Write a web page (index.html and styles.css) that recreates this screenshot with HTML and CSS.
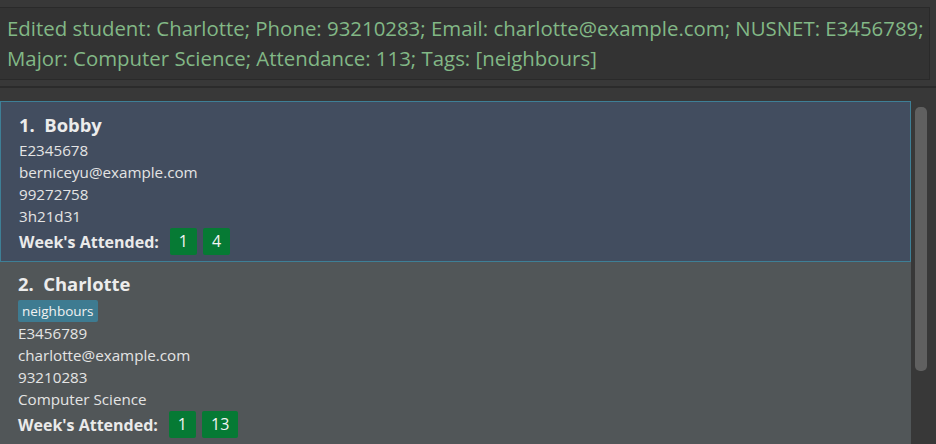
FILE: index.html
```html
<!DOCTYPE html>
<html>
<head>
<meta charset="utf-8">
<link rel="stylesheet" href="styles.css">
</head>
<body>
<div class="app">
  <div class="result-box">
    <p class="result-text">Edited student: Charlotte; Phone: 93210283; Email: charlotte@example.com; NUSNET: E3456789; Major: Computer Science; Attendance: 113; Tags: [neighbours]</p>
  </div>
  <div class="divider"></div>
  <div class="list-area">
    <div class="list">
      <div class="card selected">
        <div class="name">1.&nbsp;&nbsp;Bobby</div>
        <div class="field">E2345678</div>
        <div class="field">berniceyu@example.com</div>
        <div class="field">99272758</div>
        <div class="field">3h21d31</div>
        <div class="weeks"><span class="weeks-label">Week's Attended:</span><span class="badge">1</span><span class="badge">4</span></div>
      </div>
      <div class="card">
        <div class="name">2.&nbsp;&nbsp;Charlotte</div>
        <div class="tags"><span class="tag">neighbours</span></div>
        <div class="field">E3456789</div>
        <div class="field">charlotte@example.com</div>
        <div class="field">93210283</div>
        <div class="field">Computer Science</div>
        <div class="weeks"><span class="weeks-label">Week's Attended:</span><span class="badge">1</span><span class="badge">13</span></div>
      </div>
    </div>
    <div class="scroll-track"><div class="scroll-thumb"></div></div>
  </div>
</div>
</body>
</html>
```

FILE: styles.css
```css
html, body {
  margin: 0;
  padding: 0;
  background: #383838;
  height: 444px;
  overflow: hidden;
}
.app {
  font-family: "Open Sans", "Noto Sans", sans-serif;
  padding-top: 7px;
}
.result-box {
  width: 930px;
  height: 73px;
  box-sizing: border-box;
  background: #333333;
  border: 1px solid #2a2a2a;
  border-left: none;
  padding: 5px 0 0 7px;
}
.result-text {
  margin: 0;
  color: #82b886;
  font-size: 20.4px;
  line-height: 30px;
  letter-spacing: 0;
}
.divider {
  margin-top: 6px;
  height: 2px;
  background: #2b2b2b;
}
.list-area {
  display: flex;
  padding-top: 13px;
}
.list {
  width: 911px;
  flex: none;
}
.card {
  background: #515658;
  padding: 9px 0 6px 18px;
  box-sizing: border-box;
  height: 182px;
  color: #e6e6e6;
}
.card.selected {
  background: #424d5f;
  border: 1px solid #3e7f96;
  height: 161px;
  padding: 10px 0 0 18px;
}
.name {
  font-weight: 700;
  font-size: 18.4px;
  line-height: 26px;
  color: #ececec;
}
.card.selected .name {
  margin-bottom: 1px;
}
.field {
  font-size: 15.2px;
  line-height: 22px;
  color: #e4e4e4;
}
.tags {
  display: flex;
  margin: 3px 0 0;
}
.tag {
  background: #3e7b91;
  color: #f2f2f2;
  font-size: 13.5px;
  line-height: 22px;
  padding: 0 4px;
  border-radius: 2px;
}
.weeks {
  display: flex;
  align-items: center;
  gap: 6px;
  margin-top: 1px;
}
.weeks-label {
  font-weight: 700;
  font-size: 16px;
  color: #eaeaea;
  margin-right: 5px;
}
.badge {
  background: #067a34;
  color: #f4f4f4;
  font-size: 16px;
  line-height: 27px;
  padding: 0 9px;
  border-radius: 2px;
}
.scroll-track {
  flex: 1;
  height: 340px;
  padding: 6px 0 0 4px;
  background: #383838;
}
.scroll-thumb {
  width: 12px;
  height: 264px;
  background: #606060;
  border-radius: 5px;
}
```
